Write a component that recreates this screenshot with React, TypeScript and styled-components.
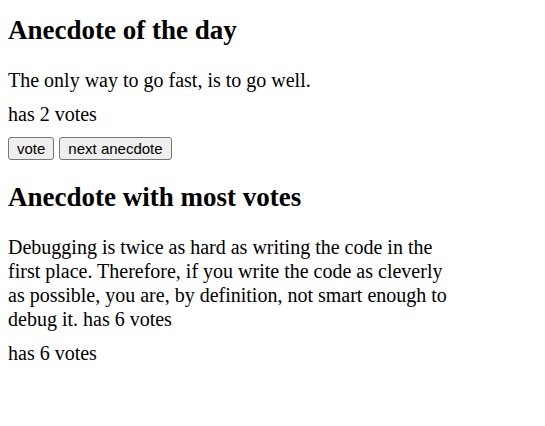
import React, {useState} from "react";
import styled, {createGlobalStyle} from "styled-components";

const anecdotes = [
    'If it hurts, do it more often.',
    'The only way to go fast, is to go well.',
    'Debugging is twice as hard as writing the code in the first place. Therefore, if you write the code as cleverly as possible, you are, by definition, not smart enough to debug it.',
]

export default function App() {
    const [selected, setSelected] = useState<number>(1)
    const [votes, setVotes] = useState<number[]>([0, 2, 6])

    const best = votes.indexOf(Math.max(...votes))

    const vote = () => {
        const copy = [...votes]
        copy[selected] += 1
        setVotes(copy)
    }

    const next = () => setSelected(Math.floor(Math.random() * anecdotes.length))

    return (
        <>
            <GlobalStyle/>
            <Page>
                <Heading>Anecdote of the day</Heading>
                <Text>{anecdotes[selected]}</Text>
                <Text>has {votes[selected]} votes</Text>
                <Buttons>
                    <Button onClick={vote}>vote</Button>
                    <Button onClick={next}>next anecdote</Button>
                </Buttons>
                <Heading>Anecdote with most votes</Heading>
                <Text>{anecdotes[best]} has {votes[best]} votes</Text>
                <Text>has {votes[best]} votes</Text>
            </Page>
        </>
    )
}

const GlobalStyle = createGlobalStyle`
    body {
        margin: 8px;
        font-family: "Liberation Serif", "Times New Roman", serif;
        font-size: 20px;
        color: #000;
        background: #fff;
    }
`

const Page = styled.div`
    display: flow-root;
    max-width: 450px;
`

const Heading = styled.h2`
    font-size: 27px;
    font-weight: bold;
    line-height: 31px;
    margin: 22px 0;

    &:first-child {
        margin-top: 7px;
    }
`

const Text = styled.p`
    margin: 10px 0;
    line-height: 24px;
`

const Buttons = styled.div`
    display: flex;
    gap: 5px;
    margin: 11px 0 10px;
`

const Button = styled.button`
    font-family: "Liberation Sans", Arial, sans-serif;
    font-size: 15px;
    line-height: 17px;
    padding: 2px 8px;
    color: #000;
    background: #efefef;
    border: 1px solid #767676;
    border-radius: 3px;
`
